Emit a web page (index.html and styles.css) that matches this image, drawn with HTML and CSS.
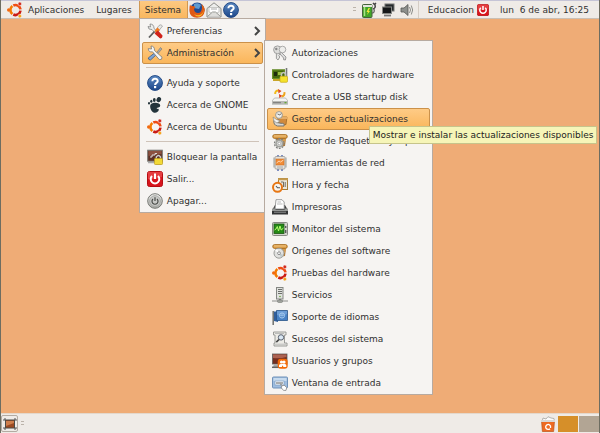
FILE: index.html
```
<!DOCTYPE html>
<html lang="es">
<head>
    <meta charset="utf-8">
    <meta name="viewport" content="width=device-width, initial-scale=1.0">
    <title>Escritorio</title>
    <link rel="stylesheet" href="styles.css">
</head>
<body>
    <!-- shared icons -->
    <svg class="defs" aria-hidden="true">
        <defs>
            <linearGradient id="blue" x2="0" y2="1"><stop stop-color="#5f8cc4"/><stop offset="1" stop-color="#1b4588"/></linearGradient>
            <linearGradient id="steel" x2="0" y2="1"><stop stop-color="#f6f6f4"/><stop offset="1" stop-color="#a9aaa6"/></linearGradient>
        </defs>
        <symbol id="ubuntu" viewBox="0 0 16 16">
            <g fill="none" stroke-width="2.6">
                <path d="M5.4 12A5 5 0 0 1 5.4 4" stroke="#f57b00"/>
                <path d="M6.3 3.5A5 5 0 0 1 13.5 7.4" stroke="#f04c12"/>
                <path d="M13.5 8.7A5 5 0 0 1 6.3 12.5" stroke="#cb1a12"/>
            </g>
            <circle cx="1.7" cy="8" r="1.7" fill="#f26a10"/>
            <circle cx="12.8" cy="1.9" r="1.8" fill="#d02b20" stroke="#f6f4f2" stroke-width=".5"/>
            <circle cx="12.8" cy="14.1" r="1.8" fill="#f6a21a" stroke="#f6f4f2" stroke-width=".5"/>
        </symbol>
        <symbol id="help" viewBox="0 0 16 16">
            <circle cx="8" cy="8" r="7.4" fill="url(#blue)" stroke="#234a86"/>
            <path d="M5.4 6.2C5.4 2.8 10.8 3 10.7 6.1C10.6 8 8.1 7.9 8.1 10" fill="none" stroke="#fff" stroke-width="2"/>
            <rect x="7" y="11" width="2.2" height="2.2" fill="#fff"/>
        </symbol>
        <symbol id="power" viewBox="0 0 16 16">
            <rect x=".5" y=".5" width="15" height="15" rx="2" fill="#d8141c" stroke="#b50d12"/>
            <path d="M1 1H15V6Q8 9 1 8Z" fill="#ee5a5a" opacity=".6"/>
            <path d="M5 5A4.3 4.3 0 1 0 11 5" fill="none" stroke="#fff" stroke-width="2"/>
            <path d="M8 2.5V8" stroke="#fff" stroke-width="2"/>
        </symbol>
        <symbol id="package" viewBox="0 0 16 16">
            <path d="M4 5H14L13 13L6 14Z" fill="#b77a32"/>
            <path d="M8 5H14L13 10H8Z" fill="#d69a4c"/>
            <rect x=".7" y="1.5" width="14.6" height="4" rx="2" fill="#d99a45" stroke="#a56c22" stroke-width=".8"/>
            <path d="M2 3H14" stroke="#f2c886"/>
        </symbol>
    </svg>

    <header class="panel panel-top">
        <nav class="menubar">
            <button class="menu-button"><svg class="icon"><use href="#ubuntu"/></svg>Aplicaciones</button>
            <button class="menu-button">Lugares</button>
            <div class="menu-anchor">
                <button class="menu-button open" aria-expanded="true">Sistema</button>

                <ul class="menu">
                    <li>
                        <button class="item">
                            <svg class="icon" viewBox="0 0 16 16"><path d="M3 1L3.5 4L1 3.5Q1 7 5 6.5L12.5 14.5L14.5 12.8L7 5.5Q7 1 3 1Z" fill="#eceeec" stroke="#777" stroke-width=".7"/><path d="M8 8L12 2.5Q14 .8 15.5 3L10.5 9.5Z" fill="#e8e9e7" stroke="#888" stroke-width=".6"/><path d="M7.5 8L10.5 4.5L13 7L9.5 10Z" fill="#f37b20"/><path d="M9 9L11 7.5L15.5 12.5Q15.5 15.4 13.2 15.4L7.5 10.5Z" fill="#d0231b"/><path d="M7.5 8.5L2 14.5" stroke="#5c5c5c" stroke-width="1.8"/></svg>
                            <span>Preferencias</span>
                            <svg class="arrow" viewBox="0 0 8 10"><path d="M2 1L6 5L2 9"/></svg>
                        </button>
                    </li>
                    <li>
                        <button class="item active" aria-expanded="true">
                            <svg class="icon" viewBox="0 0 16 16"><path d="M9 8.5L13.5 2.5L15 4L10.5 9Z" fill="#a7aaab" stroke="#666" stroke-width=".5"/><path d="M7.5 8L1.2 13Q1.4 15 3.5 15L9.5 9.5Z" fill="#7fa4d2" stroke="#365b8d" stroke-width=".8"/><path d="M4 1L4.5 4L1.2 3.6Q1.5 7.5 5.5 6.8L12.3 14.6Q15.2 15.3 15 12.2L7.5 5.5Q7.7 1.1 4 1Z" fill="#f4f5f4" stroke="#777" stroke-width=".8"/></svg>
                            <span>Administración</span>
                            <svg class="arrow" viewBox="0 0 8 10"><path d="M2 1L6 5L2 9"/></svg>
                        </button>

                        <ul class="menu submenu">
                            <li><button class="item">
                                <svg class="icon" viewBox="0 0 16 16"><path d="M8 6L14 12L13.4 15L11.6 14.7V13L8 9Z" fill="#ddd" stroke="#888" stroke-width=".8"/><path d="M6 7L8 9L6.8 10.5L7.8 12L6 15L4.4 13.5V8Z" fill="#e6e6e4" stroke="#888" stroke-width=".8"/><circle cx="5.5" cy="4.8" r="3.9" fill="#dededc" stroke="#999" stroke-width=".9"/><circle cx="10.5" cy="4.5" r="3.3" fill="#ededeb" stroke="#999" stroke-width=".8"/><circle cx="4.3" cy="4" r="1.2" fill="#888"/></svg>
                                <span>Autorizaciones</span>
                            </button></li>
                            <li><button class="item">
                                <svg class="icon" viewBox="0 0 16 16"><rect y="2.5" width="13" height="9.5" fill="#45690e"/><rect x=".5" y="3" width="12" height="8.5" fill="none" stroke="#6b9226"/><rect x="2" y="5" width="3" height="4" fill="#1d2b0d"/><rect x="6" y="5" width="4" height="3" fill="#9bbd43"/><path d="M1 13H8" stroke="#c8a62a" stroke-width="2"/><path d="M14.5 1V13" stroke="#777a78" stroke-width="1.6"/><path d="M9.5 10V7Q11.5 4 13.5 7V10" fill="none" stroke="#c2c4be" stroke-width="1.5"/><rect x="8" y="9.3" width="7.5" height="6" rx="1" fill="#f4e22b" stroke="#c7a818" stroke-width=".7"/></svg>
                                <span>Controladores de hardware</span>
                            </button></li>
                            <li><button class="item">
                                <svg class="icon" viewBox="0 0 16 16"><path d="M2.5 9H13.5L16 12V15H0V12Z" fill="#f4f4f2" stroke="#999" stroke-width=".6"/><rect y="12" width="16" height="3.5" fill="#b8b9b5"/><path d="M1 13.7H9" stroke="#777"/><rect x="12.5" y="13" width="2" height="1.3" fill="#62a635"/><path d="M3.2 5Q3 1.5 6.5 1.5" fill="none" stroke="#f0ba18" stroke-width="2"/><path d="M6 0L9.5 2L6.5 4.5Z" fill="#e0481f"/><path d="M12.4 3.2Q13 7 9.5 7.4" fill="none" stroke="#eda41c" stroke-width="2"/><path d="M7 5L10 6.7L7.4 9.3Z" fill="#dd3b1d"/></svg>
                                <span>Create a USB startup disk</span>
                            </button></li>
                            <li>
                                <button class="item active" aria-describedby="tip">
                                    <svg class="icon" viewBox="0 0 16 16"><path d="M5.5 6H15L14 13.5L7 14.5Z" fill="#d18a3c" stroke="#94601f" stroke-width=".7"/><path d="M5.5 6H15.5V8H6Z" fill="#e5ad67"/><circle cx="7" cy="4" r="3.4" fill="#efefec" stroke="#8a8982" stroke-width=".8"/><path d="M5.5 3Q8 5 9.5 2.5M2 9Q1 14 5.5 15H12Q13 12 9 12.3L5 11.5" fill="#d8d8d4" stroke="#74736e" stroke-width="1"/><path d="M1 6L4.5 8.5Q7 9 8 10L5 12Q1 11 1 6Z" fill="#f2f2ef" stroke="#8a8982" stroke-width=".7"/></svg>
                                    <span>Gestor de actualizaciones</span>
                                </button>
                                <div class="tooltip" id="tip" role="tooltip">Mostrar e instalar las actualizaciones disponibles</div>
                            </li>
                            <li><button class="item">
                                <svg class="icon" viewBox="0 0 16 16"><use href="#package"/><circle cx="7.3" cy="10.5" r="4.8" fill="none" stroke="#7e7f7c" stroke-width="1.3" stroke-dasharray="1.8 1.2"/><circle cx="7.3" cy="10.5" r="3.3" fill="#d9dad7" stroke="#a2a39f" stroke-width="1.6"/><circle cx="7.3" cy="10.5" r="1.3" fill="#fff" stroke="#777" stroke-width=".5"/></svg>
                                <span>Gestor de Paquetes Synaptic</span>
                            </button></li>
                            <li><button class="item">
                                <svg class="icon" viewBox="0 0 16 16"><path d="M6 0V3M10 0V3M6 13V16M10 13V16" stroke="#5b6fb2" stroke-width="1.5"/><path d="M2 2.5V12.5M14 2.5V12.5" stroke="#b9bab7" stroke-width="1.5"/><rect x="3" y="1.5" width="10" height="12.5" rx="1" fill="#e5e3df" stroke="#9b9995" stroke-width=".8"/><rect x="4" y="4" width="8" height="6" fill="#f28c37" stroke="#c66d24" stroke-width=".6"/><path d="M4.5 8L7 6L8.5 7L11.5 5" fill="none" stroke="#ffd5ad"/><path d="M5 12H11" stroke="#aaa"/></svg>
                                <span>Herramientas de red</span>
                            </button></li>
                            <li><button class="item">
                                <svg class="icon" viewBox="0 0 16 16"><rect x="6.5" y="1.5" width="9" height="11" fill="#e9e7dc" stroke="#a67d35"/><path d="M6 2.2H16" stroke="#c49a4f" stroke-width="2"/><path d="M9 5H11.5V10M13.2 5V10" stroke="#736d5f" fill="none"/><circle cx="5.5" cy="10.3" r="4.5" fill="#f7f5f0" stroke="#e77613" stroke-width="2"/><path d="M4 9L5.5 10.8H8" fill="none" stroke="#555" stroke-width="1.1"/></svg>
                                <span>Hora y fecha</span>
                            </button></li>
                            <li><button class="item">
                                <svg class="icon" viewBox="0 0 16 16"><path d="M3 6L1 9.5V14.5H15V9.5L13 6Z" fill="#3d3e3e"/><path d="M4 .7H10L12.2 3V10H3Z" fill="#fff" stroke="#888" stroke-width=".8"/><path d="M5.5 3H9M5 5H10.5" stroke="#bbb"/><path d="M0 9.5H3.5V11H12.5V9.5H16V12.5H0Z" fill="#969896"/><rect y="12" width="16" height="3.5" fill="#343535"/><path d="M2 13.2H14" stroke="#aaa" stroke-width=".8"/></svg>
                                <span>Impresoras</span>
                            </button></li>
                            <li><button class="item">
                                <svg class="icon" viewBox="0 0 16 16"><rect x=".5" y="1.5" width="15" height="13" rx="1" fill="#d3d3cd" stroke="#888a84"/><rect x="2" y="3" width="10" height="9.5" fill="#258a16" stroke="#1b5512" stroke-width=".8"/><path d="M2.5 9L4 8L5.3 5.5L6.5 10L8 5L9.2 9L11.5 7" fill="none" stroke="#b7ff6e"/><path d="M13.7 5V7M13.7 9V12" stroke="#555" stroke-width="1.3"/></svg>
                                <span>Monitor del sistema</span>
                            </button></li>
                            <li><button class="item">
                                <svg class="icon" viewBox="0 0 16 16"><use href="#package"/><circle cx="7" cy="10.2" r="5" fill="#e1e1df" stroke="#92938f" stroke-width=".9"/><path d="M7 10.2L3 7.5L5 6Z" fill="#fff"/><path d="M7 10.2L11.5 12L9 14.6Z" fill="#bfc8c9"/><circle cx="7" cy="10.2" r="1.4" fill="#fff" stroke="#777" stroke-width=".8"/></svg>
                                <span>Orígenes del software</span>
                            </button></li>
                            <li><button class="item"><svg class="icon"><use href="#ubuntu"/></svg><span>Pruebas del hardware</span></button></li>
                            <li><button class="item">
                                <svg class="icon" viewBox="0 0 16 16"><path d="M0 14H16" stroke="#b0b1ae" stroke-width="1.5"/><rect x="4.5" y=".5" width="6.5" height="11.5" fill="#e1e2df" stroke="#858783"/><path d="M6 2.5H10M6 4.5H10M6 6.5H10" stroke="#6c6e6a"/><circle cx="8" cy="9.5" r=".8" fill="#64a23a"/><path d="M8 12V14" stroke="#777" stroke-width="2"/><rect x="5.5" y="13" width="5" height="2.4" rx="1" fill="#a5a7a2" stroke="#7a7c78" stroke-width=".7"/></svg>
                                <span>Servicios</span>
                            </button></li>
                            <li><button class="item">
                                <svg class="icon" viewBox="0 0 16 16"><path d="M1.2 2V16" stroke="#6e706d" stroke-width="1.5"/><path d="M2 2.5H6V13L2 12Z" fill="#315f9d"/><path d="M4.5 1.5H15.5V11.5H4.5Z" fill="#4781c5" stroke="#285488" stroke-width=".8"/><path d="M5 2H15V5Q10 8 5 6Z" fill="#6b9dd7"/><circle cx="10" cy="6.5" r="2.6" fill="none" stroke="#a5c9ed"/><path d="M7.5 6.5H12.5M10 4V9" stroke="#a5c9ed" stroke-width=".6"/></svg>
                                <span>Soporte de idiomas</span>
                            </button></li>
                            <li><button class="item">
                                <svg class="icon" viewBox="0 0 16 16"><path d="M1.5 1H14V4H12.5V12H15V15H2V12H3V4H1.5Z" fill="#ecebe6" stroke="#91928e" stroke-width=".9"/><path d="M3 13.2H14M3 2.5H12" stroke="#bbb"/><circle cx="9" cy="6.4" r="2.7" fill="#d9e7f3" stroke="#5b6270"/><path d="M7 8.5L4.3 11.2" stroke="#444" stroke-width="1.7"/></svg>
                                <span>Sucesos del sistema</span>
                            </button></li>
                            <li><button class="item">
                                <svg class="icon" viewBox="0 0 16 16"><rect x=".5" y="1" width="14.5" height="10" fill="#742e20" stroke="#60605e" stroke-width=".8"/><path d="M1 1.5H14.5V4Q8 6 1 5Z" fill="#ad6251"/><path d="M2 11H9V14H1Z" fill="#aaa"/><path d="M0 14.3H8" stroke="#656565" stroke-width="1.5"/><rect x="5.7" y="5.7" width="10" height="10" rx="3" fill="#f36b08"/><circle cx="9.5" cy="9" r="1.6" fill="#fff"/><circle cx="12" cy="9" r="1.6" fill="#fff"/><path d="M7 14V12Q8 10.5 10 11Q13 10 14.3 12V14H11.5L10.5 12.3L9.8 14Z" fill="#fff"/></svg>
                                <span>Usuarios y grupos</span>
                            </button></li>
                            <li><button class="item">
                                <svg class="icon" viewBox="0 0 16 16"><rect x=".5" y="2" width="15" height="11" rx="1" fill="#9fbddf" stroke="#6f91b8"/><rect x="1.5" y="3" width="13" height="3" fill="#c6daee"/><rect x="3" y="6" width="9" height="4" fill="#f1f5f9" stroke="#7798bd" stroke-width=".6"/><path d="M4.5 8H11" stroke="#333" stroke-width="1.5" stroke-dasharray="1 1"/><path d="M8.5 9L11 10.8L12 10L14.7 12.5L14 15.4H11.5L9 12.5L10 12Z" fill="#fff" stroke="#777" stroke-width=".7"/></svg>
                                <span>Ventana de entrada</span>
                            </button></li>
                        </ul>
                    </li>
                    <li class="separator" role="separator"></li>
                    <li><button class="item"><svg class="icon"><use href="#help"/></svg><span>Ayuda y soporte</span></button></li>
                    <li><button class="item">
                        <svg class="icon" viewBox="0 0 16 16"><path d="M4 7C7 4.6 13.6 5.6 13.2 8.7C12.9 10.9 9.8 10.2 9.7 11.5C9.7 12.5 11 11.3 11.7 12.2C12.2 14.7 9 16.3 6.5 15.4C3.7 14.2 2 9 4 7Z" fill="#24343b"/><ellipse cx="11.8" cy="2.6" rx="2.2" ry="2.6" transform="rotate(25 11.8 2.6)" fill="#24343b"/><ellipse cx="7.3" cy="3" rx="1.4" ry="1.9" fill="#24343b"/><ellipse cx="4.3" cy="4.3" rx="1.1" ry="1.5" fill="#24343b"/><ellipse cx="2" cy="6.3" rx="1" ry="1.3" fill="#24343b"/></svg>
                        <span>Acerca de GNOME</span>
                    </button></li>
                    <li><button class="item"><svg class="icon"><use href="#ubuntu"/></svg><span>Acerca de Ubuntu</span></button></li>
                    <li class="separator" role="separator"></li>
                    <li><button class="item">
                        <svg class="icon" viewBox="0 0 16 16"><rect x=".7" y="1.2" width="14.6" height="11" fill="#5d3126" stroke="#777975"/><path d="M1.5 2H14.5V5L1.5 7Z" fill="#8c5140"/><path d="M3 8H5V6H8V4.5H10" fill="none" stroke="#ddd"/><path d="M1 13.5H7" stroke="#aaa" stroke-width="1.5"/><path d="M9.3 10V8Q11.5 5 13.5 8V10" fill="none" stroke="#ccc" stroke-width="1.4"/><rect x="7.5" y="9.5" width="8" height="6" rx=".8" fill="#f2d936" stroke="#bd9c20" stroke-width=".8"/></svg>
                        <span>Bloquear la pantalla</span>
                    </button></li>
                    <li><button class="item"><svg class="icon"><use href="#power"/></svg><span>Salir...</span></button></li>
                    <li><button class="item">
                        <svg class="icon" viewBox="0 0 16 16"><circle cx="8" cy="8" r="7.3" fill="url(#steel)" stroke="#777974"/><circle cx="8" cy="8" r="5.4" fill="#c9cac7" stroke="#999b96" stroke-width=".7"/><path d="M6 6A3 3 0 1 0 10 6M8 4.2V8" fill="none" stroke="#484a47" stroke-width="1.2"/></svg>
                        <span>Apagar...</span>
                    </button></li>
                </ul>
            </div>
        </nav>

        <div class="launchers">
            <button class="launcher" aria-label="Firefox">
                <svg class="icon" viewBox="0 0 16 16"><circle cx="8.2" cy="7.8" r="7.3" fill="#214a91"/><path d="M5 2Q9 0 12 3L10 7L5 6Z" fill="#5e9bd2"/><path d="M1 2.5Q1.5 4 3 4Q5 4 6.5 5L5 7Q5.3 11 9 11Q12.5 11 13 6Q13.2 4 12.2 2Q15.8 4.5 15.8 8.5Q15 15.7 8 15.8Q1 15.4.4 9Q.2 5 1 2.5Z" fill="#df5915"/><path d="M12.8 2.5Q16 7 13.5 11Q10 15 5 12Q8 16 12 13.7Q17 10 12.8 2.5Z" fill="#f9bd27"/></svg>
            </button>
            <button class="launcher" aria-label="Correo">
                <svg class="icon" viewBox="0 0 16 16"><path d="M1 6.5L8 .8L15 6.5V15H1Z" fill="#eeeeec" stroke="#8b8c88"/><path d="M3 5.5H13V10L8 12L3 10Z" fill="#fff" stroke="#b5b5b1" stroke-width=".7"/><path d="M5 7H11" stroke="#aaa"/><path d="M1.5 14.5L6.5 10H9.5L14.5 14.5" fill="#dededb" stroke="#999b96"/></svg>
            </button>
            <button class="launcher" aria-label="Ayuda"><svg class="icon"><use href="#help"/></svg></button>
        </div>

        <div class="tray">
            <span class="grip"></span>
            <svg class="icon" viewBox="0 0 16 16"><path d="M12 7Q15 6 14 3L12 1M15 1L13 3" fill="none" stroke="#444" stroke-width="1.5"/><rect x="1.5" y="2.5" width="9.5" height="13" rx="1" fill="#41a529" stroke="#45623c"/><path d="M2 3H11V5H2Z" fill="#e3e6df"/><path d="M3.5 5V14" stroke="#a9e287" stroke-width="1.5"/><path d="M7.5 6L5.5 10H7L6 13L9 9H7.5L9 6Z" fill="#f4e83a"/><path d="M11 11Q14 11 13 7" fill="none" stroke="#666" stroke-width="1.3"/></svg>
            <svg class="icon" viewBox="0 0 16 16"><rect x="5" y="2" width="9" height="7" fill="#262a2d" stroke="#737573"/><rect x="2.5" y="5" width="9" height="6.5" fill="#141719" stroke="#858784"/><path d="M4 13.5H11" stroke="#777" stroke-width="1.8"/></svg>
            <svg class="icon" viewBox="0 0 16 16"><path d="M2 6H5L9 2.5V13.5L5 10H2Z" fill="#8d8f8c" stroke="#555753" stroke-width=".8"/><path d="M10.5 5Q12.5 8 10.5 11M12.3 3.5Q15 8 12.3 12.5" fill="none" stroke="#8c8e8a"/></svg>
            <span class="divider"></span>
            <button class="session">Educacion<svg class="power"><use href="#power"/></svg></button>
            <time class="clock" datetime="16:25">lun&nbsp; 6 de abr, 16:25</time>
        </div>
    </header>

    <main class="desktop"></main>

    <footer class="panel panel-bottom">
        <button class="show-desktop" aria-label="Mostrar el escritorio">
            <svg viewBox="0 0 14 12"><rect x="2.5" y="2" width="9" height="8" fill="#9b4a22" stroke="#4b4a47"/><path d="M3 3H11V5L3 8Z" fill="#cf7e4c"/><path d="M1 3V1H3M11 1H13V3M1 9V11H3M11 11H13V9" fill="none" stroke="#555"/></svg>
        </button>
        <span class="grip"></span>
        <div class="workspaces">
            <button class="trash" aria-label="Papelera">
                <svg class="icon" viewBox="0 0 16 16"><path d="M2 6L3 2L6 3L8 .7L11 2L14 2.5L14.5 6Z" fill="#fafafa" stroke="#a3a3a0" stroke-width=".8"/><path d="M1.5 4.5H14.5L13.6 15.5H2.4Z" fill="#ed6b22" stroke="#bc5118" stroke-width=".7"/><path d="M1 4H15V6H1Z" fill="#d9d8d5"/><path d="M10 12.7A2.5 2.5 0 1 1 10.5 10V12" fill="none" stroke="#fff" stroke-width="1.3"/></svg>
            </button>
            <button class="workspace current" aria-label="Área de trabajo 1"></button>
            <button class="workspace" aria-label="Área de trabajo 2"></button>
        </div>
    </footer>
</body>
</html>
```

FILE: styles.css
```
:root {
    --panel: #efebe7;
    --menu: #f6f4f2;
    --desktop: #efac76;
    --text: #303030;
    --line: #b7aaa0;
}

* {
    box-sizing: border-box;
}

body {
    margin: 0;
    min-height: 100vh;
    display: flex;
    flex-direction: column;
    background: var(--desktop);
    border: 0 solid #6d6d61;
    border-width: 0 1px;
    color: var(--text);
    font: 9px/12px "DejaVu Sans", sans-serif;
}

button {
    margin: 0;
    padding: 0;
    border: 0;
    background: none;
    color: inherit;
    font: inherit;
}

.defs {
    position: absolute;
    width: 0;
    height: 0;
}

.icon {
    display: block;
    flex: none;
    width: 16px;
    height: 16px;
}

.panel {
    display: flex;
    align-items: center;
    background: var(--panel);
}

.panel-top {
    height: 19px;
    border-top: 1px solid #c5c4d6;
    border-bottom: 1px solid #c9bfb5;
}

.menubar {
    display: flex;
    gap: 6px;
    height: 100%;
    padding-left: 6px;
}

.menu-button {
    display: flex;
    align-items: center;
    gap: 5px;
    height: 100%;
    padding-right: 6px;
}

.menu-button + .menu-anchor {
    margin-left: -5px;
}

.menu-button.open {
    padding: 0 6px 0 5px;
    background: linear-gradient(#fdc982, #f9b75e);
    border: 1px solid #cf9853;
    border-width: 0 1px;
}

.menu-anchor {
    position: relative;
}

.menu {
    position: absolute;
    top: 100%;
    left: 0;
    z-index: 1;
    width: 127px;
    margin: 0;
    padding: 1px 2px 0;
    list-style: none;
    background: var(--menu);
    border: 1px solid var(--line);
}

.menu > li {
    position: relative;
}

.submenu {
    top: -2px;
    left: 122px;
    width: 169px;
}

.item {
    display: flex;
    align-items: center;
    gap: 4px;
    width: 100%;
    height: 22px;
    padding: 0 1px 0 4px;
    border: 1px solid transparent;
    border-radius: 2px;
    text-align: left;
    white-space: nowrap;
}

.item.active {
    background: linear-gradient(#fecb86, #fab65b);
    border-color: #cb914a;
}

.arrow {
    flex: none;
    width: 8px;
    height: 10px;
    margin-left: auto;
    fill: none;
    stroke: #444;
    stroke-width: 2;
}

.separator {
    height: 8px;
    padding: 3px 4px;
}

.separator::before {
    content: "";
    display: block;
    height: 1px;
    background: #cfc3b9;
}

.tooltip {
    position: absolute;
    top: 18px;
    left: 102px;
    z-index: 2;
    padding: 2px 3px;
    background: #f6f5b8;
    border: 1px solid #c6c48b;
    color: #222;
    white-space: nowrap;
}

.launchers {
    display: flex;
    gap: 1px;
    padding-left: 1px;
}

.tray {
    display: flex;
    align-items: center;
    gap: 3px;
    height: 100%;
    margin-left: auto;
    padding-right: 10px;
}

.grip {
    width: 3px;
    height: 6px;
    margin: 0 2px;
    background: repeating-linear-gradient(#bbb3aa 0 1px, transparent 1px 3px);
}

.divider {
    width: 1px;
    height: 100%;
    margin-right: 6px;
    background: #d5cdc5;
}

.session {
    display: flex;
    align-items: center;
    gap: 3px;
}

.power {
    width: 12px;
    height: 12px;
}

.clock {
    margin-left: 8px;
}

.desktop {
    flex: 1;
}

.panel-bottom {
    height: 20px;
    gap: 1px;
    border-top: 1px solid #e4d8cc;
}

.show-desktop {
    display: grid;
    place-items: center;
    width: 17px;
    height: 17px;
    border: 1px solid #b3aba2;
    border-radius: 2px;
}

.show-desktop svg {
    width: 14px;
    height: 12px;
}

.workspaces {
    display: flex;
    align-items: center;
    gap: 1px;
    height: 100%;
    margin-left: auto;
}

.trash {
    margin-right: 1px;
}

.workspace {
    width: 20px;
    height: 16px;
    background: #b2a594;
}

.workspace.current {
    background: #d68f29;
}
```
